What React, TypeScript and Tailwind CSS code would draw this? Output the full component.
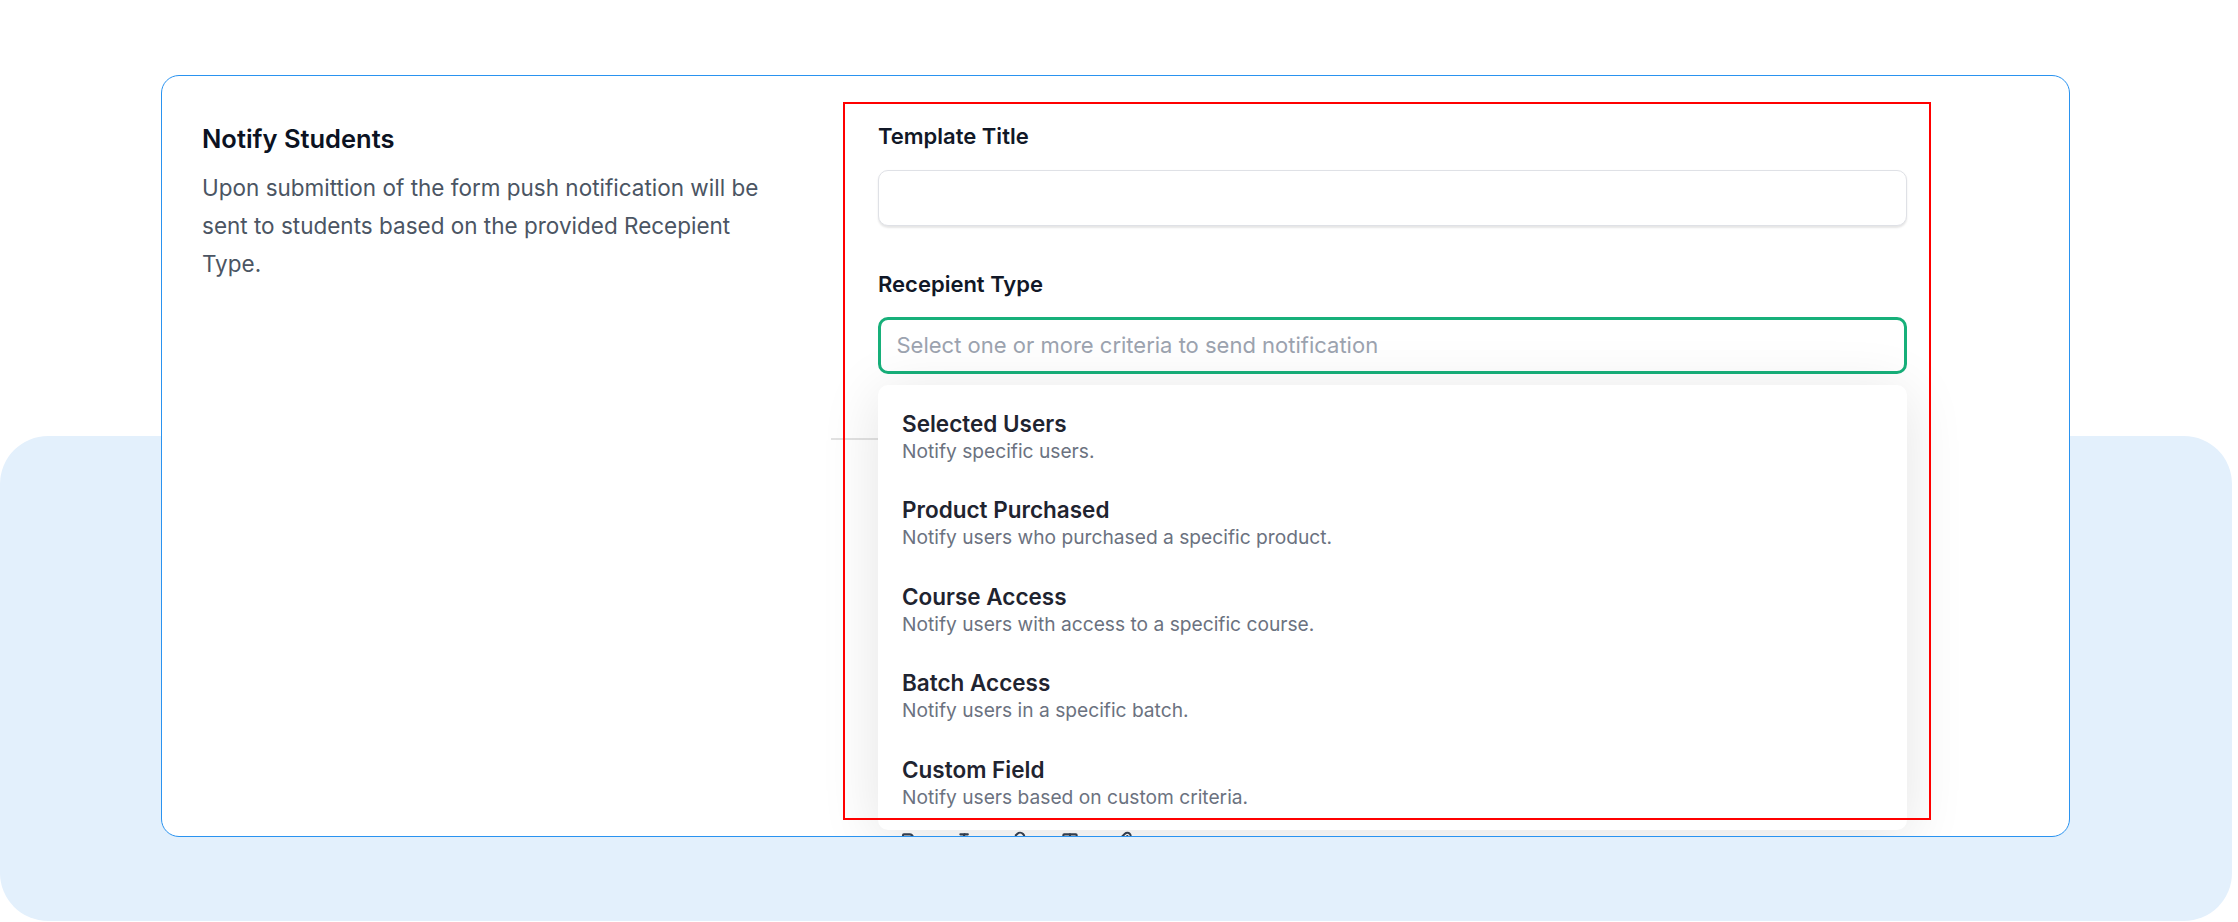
import { Bold, Italic, Link, Type, Paperclip } from 'lucide-react';

const items = [
  { title: 'Selected Users', desc: 'Notify specific users.' },
  { title: 'Product Purchased', desc: 'Notify users who purchased a specific product.' },
  { title: 'Course Access', desc: 'Notify users with access to a specific course.' },
  { title: 'Batch Access', desc: 'Notify users in a specific batch.' },
  { title: 'Custom Field', desc: 'Notify users based on custom criteria.' },
];

export default function App() {
  return (
    <div className="relative w-[2238px] h-[922px] overflow-hidden bg-white font-['Inter',sans-serif]">
      <div className="absolute left-0 top-[436px] w-[2232px] h-[485px] rounded-[48px] bg-[#e3f0fc]" />
      <div className="relative ml-[161px] mt-[75px] w-[1909px] h-[762px] rounded-[18px] border-[1.5px] border-[#2a93f0] bg-white overflow-hidden flex">
        <div className="w-[716px] shrink-0 pl-[40px] pt-[47px]">
          <h2 className="text-[25.5px] leading-[32px] font-semibold text-[#0b1222]">Notify Students</h2>
          <p className="mt-[14px] w-[566px] text-[22.5px] leading-[38px] text-[#4b5563]">
            Upon submittion of the form push notification will be sent to students based on the provided Recepient Type.
          </p>
        </div>
        <div className="w-[1029px] shrink-0 pt-[45px]">
          <label className="block text-[22px] leading-[30px] font-semibold text-[#111827]">Template Title</label>
          <div className="mt-[19px] h-[56px] rounded-[10px] border-[1.5px] border-[#dfe1e6] bg-white shadow-[0_1.5px_2px_rgba(0,0,0,0.1)]" />
          <label className="mt-[43px] block text-[22px] leading-[30px] font-semibold text-[#111827]">Recepient Type</label>
          <div className="relative mt-[18px]">
            <div className="h-[57px] rounded-[10px] border-[3px] border-[#17b07a] bg-white flex items-center pl-[15.5px] text-[22px] text-[#9ca3af]">
              Select one or more criteria to send notification
            </div>
            <div className="absolute left-0 right-0 top-[68px] z-10 h-[445px] overflow-hidden rounded-[10px] bg-white py-[8px] shadow-[0_8px_60px_rgba(0,0,0,0.11)]">
              {items.map((it) => (
                <div key={it.title} className="px-[24px] py-[15.75px]">
                  <div className="text-[22.5px] leading-[29px] font-semibold text-[#1f2430]">{it.title}</div>
                  <div className="text-[19.2px] leading-[26px] text-[#6b7280]">{it.desc}</div>
                </div>
              ))}
            </div>
          </div>
          <div className="mt-[64px] -ml-[47px] w-[200px] h-[2px] bg-[#e2e2e2]" />
          <div className="mt-[391px] flex items-start gap-[34px] pl-[20px] text-[#374151]">
            <Bold size={20} strokeWidth={2.5} />
            <Italic size={20} strokeWidth={2.5} />
            <Link size={20} strokeWidth={2.5} />
            <Type size={20} strokeWidth={2.5} />
            <Paperclip size={20} strokeWidth={2.5} />
          </div>
        </div>
      </div>
      <div className="pointer-events-none absolute left-[843px] top-[102px] z-20 w-[1088px] h-[718px] border-2 border-[#ff0000]" />
    </div>
  );
}
